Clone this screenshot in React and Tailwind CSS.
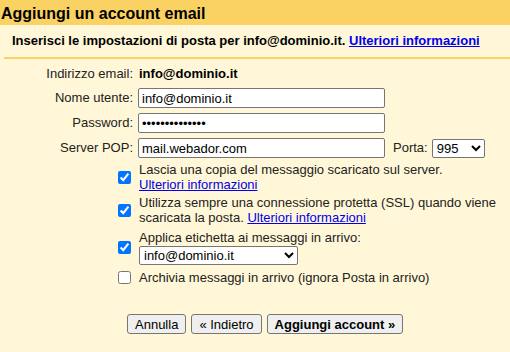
export default function App() {
  const link = 'text-[#0000ee] underline'
  const input =
    'h-[20px] w-[247px] border border-[#767676] rounded-[2px] bg-white px-[3px] text-[13px] text-black outline-none'
  const btn = 'h-[20px] rounded-[3px] border border-[#767676] bg-[#efefef] px-[7px] text-black'

  return (
    <div className="min-h-[352px] bg-[#fff7d7] font-['Liberation_Sans',Arial,sans-serif] text-[13px] text-[#222]">
      <div className="h-[25px] bg-[#fad163] pl-[1px] text-[16px] font-bold leading-[27px] text-black">
        Aggiungi un account email
      </div>
      <div className="ml-[4px] flex h-[34px] items-center border-b-2 border-[#fad163] pl-[8px] font-bold text-black">
        Inserisci le impostazioni di posta per info@dominio.it.&nbsp;
        <a href="#" className={link}>Ulteriori informazioni</a>
      </div>

      <div className="flex flex-col gap-[5px] pt-[6px]">
        <div className="flex h-[18px] items-center">
          <span className="w-[134px] pr-[1px] text-right">Indirizzo email:</span>
          <span className="pl-[5px] font-bold text-black">info@dominio.it</span>
        </div>
        <div className="flex h-[20px] items-center">
          <span className="w-[134px] pr-[1px] text-right">Nome utente:</span>
          <input className={`ml-[4px] ${input}`} defaultValue="info@dominio.it" />
        </div>
        <div className="flex h-[20px] items-center">
          <span className="w-[134px] pr-[1px] text-right">Password:</span>
          <input type="password" className={`ml-[4px] ${input}`} defaultValue="12345678901234" />
        </div>
        <div className="flex h-[20px] items-center">
          <span className="w-[134px] pr-[1px] text-right">Server POP:</span>
          <input className={`ml-[4px] ${input}`} defaultValue="mail.webador.com" />
          <span className="ml-[8px]">Porta:</span>
          <select
            defaultValue="995"
            className="ml-[4px] h-[19px] w-[53px] rounded-[2px] border border-[#767676] bg-white text-[13px] text-black"
          >
            <option>110</option>
            <option>995</option>
          </select>
        </div>
      </div>

      <div className="flex flex-col pl-[118px] leading-[15px]">
        <div className="mt-[4px] flex items-center gap-[8px]">
          <input type="checkbox" defaultChecked className="m-0 h-[13px] w-[13px] shrink-0" />
          <div>
            Lascia una copia del messaggio scaricato sul server.
            <br />
            <a href="#" className={link}>Ulteriori informazioni</a>
          </div>
        </div>
        <div className="mt-[3px] flex items-center gap-[8px]">
          <input type="checkbox" defaultChecked className="m-0 h-[13px] w-[13px] shrink-0" />
          <div>
            Utilizza sempre una connessione protetta (SSL) quando viene
            <br />
            scaricata la posta. <a href="#" className={link}>Ulteriori informazioni</a>
          </div>
        </div>
        <div className="mt-[5px] flex items-center gap-[8px]">
          <input type="checkbox" defaultChecked className="m-0 h-[13px] w-[13px] shrink-0" />
          <div className="flex flex-col items-start">
            <span>Applica etichetta ai messaggi in arrivo:</span>
            <select
              defaultValue="info@dominio.it"
              className="mt-[1px] h-[19px] w-[159px] rounded-[2px] border border-[#767676] bg-white text-[13px] text-black"
            >
              <option>info@dominio.it</option>
            </select>
          </div>
        </div>
        <div className="mt-[5px] flex items-center gap-[8px]">
          <input type="checkbox" className="m-0 h-[13px] w-[13px] shrink-0" />
          <span>Archivia messaggi in arrivo (ignora Posta in arrivo)</span>
        </div>
      </div>

      <div className="mt-[29px] flex gap-[5px] pl-[127px]">
        <button className={btn}>Annulla</button>
        <button className={btn}>« Indietro</button>
        <button className={`${btn} font-bold`}>Aggiungi account »</button>
      </div>
    </div>
  )
}
